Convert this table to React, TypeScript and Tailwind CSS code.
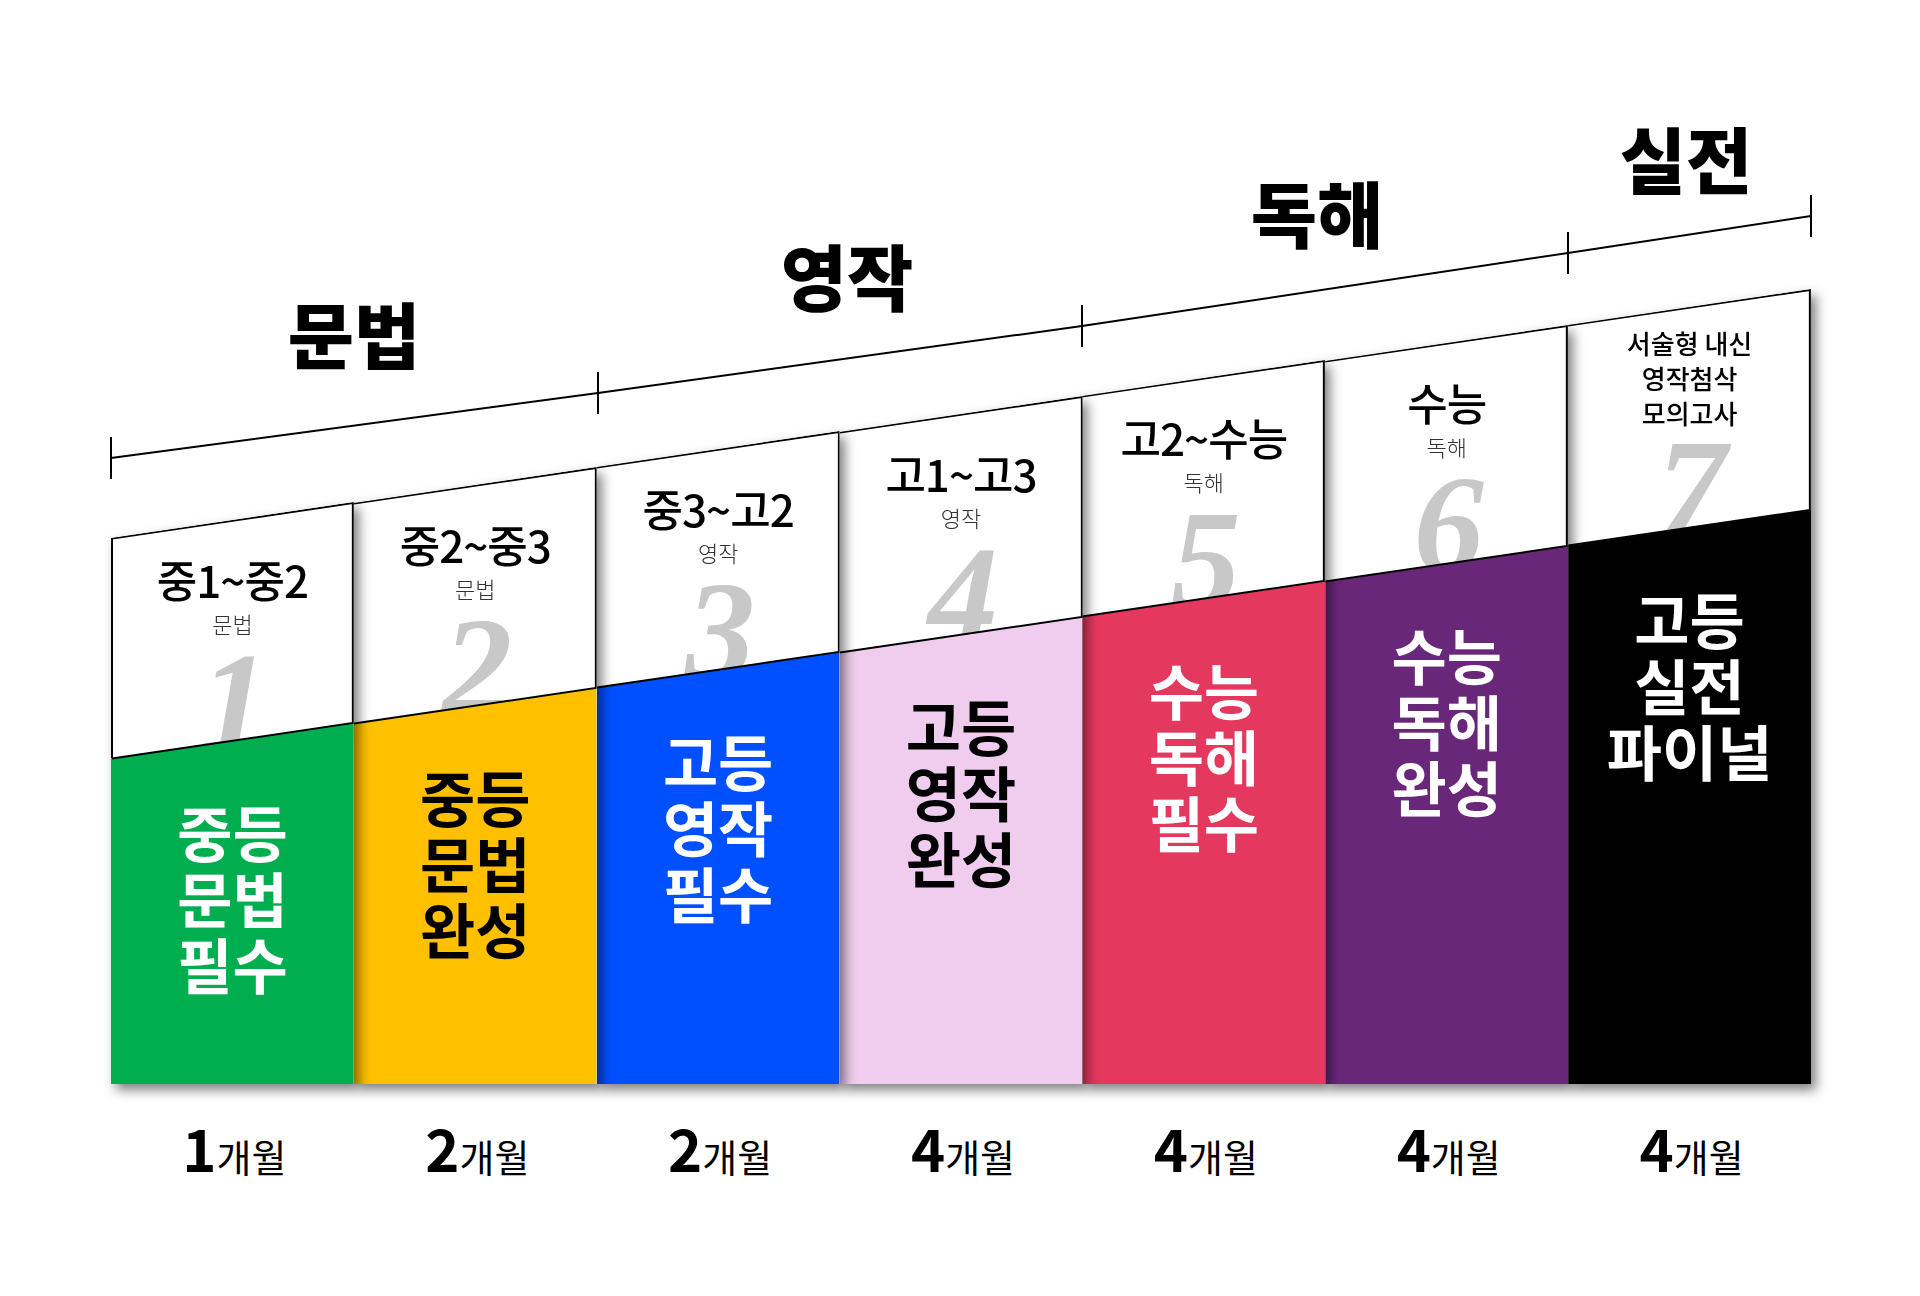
import React from "react";

type Course = {
  range: string[];
  sub?: string;
  num: string;
  title: string[];
  bg: string;
  fg: string;
  h: string;
  z: string;
  months: string;
};

const courses: Course[] = [
  { range: ["중1~중2"], sub: "문법", num: "1", title: ["중등", "문법", "필수"], bg: "bg-[#00ae50]", fg: "text-white", h: "h-[582px]", z: "z-[7]", months: "1" },
  { range: ["중2~중3"], sub: "문법", num: "2", title: ["중등", "문법", "완성"], bg: "bg-[#ffc000]", fg: "text-black", h: "h-[617px]", z: "z-[6]", months: "2" },
  { range: ["중3~고2"], sub: "영작", num: "3", title: ["고등", "영작", "필수"], bg: "bg-[#0050ff]", fg: "text-white", h: "h-[653px]", z: "z-[5]", months: "2" },
  { range: ["고1~고3"], sub: "영작", num: "4", title: ["고등", "영작", "완성"], bg: "bg-[#f0cdee]", fg: "text-black", h: "h-[688px]", z: "z-[4]", months: "4" },
  { range: ["고2~수능"], sub: "독해", num: "5", title: ["수능", "독해", "필수"], bg: "bg-[#e5385f]", fg: "text-white", h: "h-[724px]", z: "z-[3]", months: "4" },
  { range: ["수능"], sub: "독해", num: "6", title: ["수능", "독해", "완성"], bg: "bg-[#69277a]", fg: "text-white", h: "h-[759px]", z: "z-[2]", months: "4" },
  { range: ["서술형 내신", "영작첨삭", "모의고사"], num: "7", title: ["고등", "실전", "파이널"], bg: "bg-black", fg: "text-white", h: "h-[795px]", z: "z-[1]", months: "4" },
];

function Column({ c, first }: { c: Course; first: boolean }) {
  const multi = c.range.length > 1;
  return (
    <div className={`relative ${c.z} ${c.h} [filter:drop-shadow(5px_6px_6px_rgba(0,0,0,0.5))]`}>
      <div className="relative flex h-full flex-col bg-white [clip-path:polygon(0_36px,100%_0,100%_100%,0_100%)]">
        <div className="flex h-[257px] shrink-0 flex-col items-center">
          <div className={`flex h-[130px] flex-col items-center ${multi ? "pt-[36px]" : "pt-[55px]"}`}>
            {multi ? (
              c.range.map((r) => (
                <div key={r} className="text-[26px] font-medium leading-[35px] text-black">
                  {r}
                </div>
              ))
            ) : (
              <>
                <div className="text-[44px] font-medium leading-[44px] tracking-[-1px] text-black">{c.range[0]}</div>
                <div className="mt-[11px] text-[22px] font-light leading-[22px] text-[#333]">{c.sub}</div>
              </>
            )}
          </div>
          <div className="pl-[4px] font-['Liberation_Serif',serif] text-[140px] font-bold italic leading-none text-[#c8c8c8]">
            {c.num}
          </div>
        </div>
        <div
          className={`relative -mt-[36px] flex flex-1 flex-col items-center pt-[75px] ${c.bg} ${c.fg} [clip-path:polygon(0_36px,100%_0,100%_100%,0_100%)]`}
        >
          {c.title.map((t) => (
            <div key={t} className="text-[60px] font-bold leading-[66px]">
              {t}
            </div>
          ))}
        </div>
        <svg
          className="pointer-events-none absolute left-0 top-0 h-[257px] w-full overflow-visible"
          viewBox="0 0 243 257"
          preserveAspectRatio="none"
        >
          <polyline
            points={first ? "1,256.6 1,36.6 242,1 242,221 1,256.6" : "0,36.6 242,1 242,221 0,256.6"}
            fill="none"
            stroke="#000"
            strokeWidth="2"
            vectorEffect="non-scaling-stroke"
          />
        </svg>
      </div>
    </div>
  );
}

const stages = [
  { label: "문법", w: "w-[486px]", pad: "pt-[296px]" },
  { label: "영작", w: "w-[486px]", pad: "pt-[238px] pl-[14px]" },
  { label: "독해", w: "w-[486px]", pad: "pt-[175px] pr-[18px]" },
  { label: "실전", w: "w-[242px]", pad: "pt-[121px] pr-[8px]" },
];

export default function App() {
  return (
    <div className="h-[1296px] w-full overflow-hidden bg-white font-['Noto_Sans_CJK_KR','Noto_Sans',sans-serif]">
      <div className="relative ml-[111px] w-[1700px] pt-[289px]">
        {/* stage brackets */}
        <div className="pointer-events-none absolute left-0 top-0 z-20 h-[480px] w-full">
          <svg className="absolute inset-0 h-full w-full overflow-visible" viewBox="0 0 1700 480">
            <polyline points="0,458 487,393 971,326 1457,253 1700,216" fill="none" stroke="#000" strokeWidth="2" />
            {[
              [0, 458],
              [487, 393],
              [971, 326],
              [1457, 253],
              [1700, 216],
            ].map(([x, y]) => (
              <line key={x} x1={x} x2={x} y1={y - 21} y2={y + 21} stroke="#000" strokeWidth="2" />
            ))}
          </svg>
          <div className="relative flex">
            {stages.map((s) => (
              <div key={s.label} className={`${s.w} ${s.pad} shrink-0 text-center`}>
                <span className="text-[72px] font-black leading-none text-black">{s.label}</span>
              </div>
            ))}
          </div>
        </div>

        {/* course columns */}
        <div className="grid grid-cols-7 items-end">
          {courses.map((c, i) => (
            <Column key={c.num} c={c} first={i === 0} />
          ))}
        </div>

        {/* duration */}
        <div className="mt-[34px] grid grid-cols-7">
          {courses.map((c) => (
            <div key={c.num} className="flex items-baseline justify-center pl-[4px] leading-none text-black">
              <span className="text-[58px] font-bold leading-none">{c.months}</span>
              <span className="text-[38px] font-normal leading-none">개월</span>
            </div>
          ))}
        </div>
      </div>
    </div>
  );
}
